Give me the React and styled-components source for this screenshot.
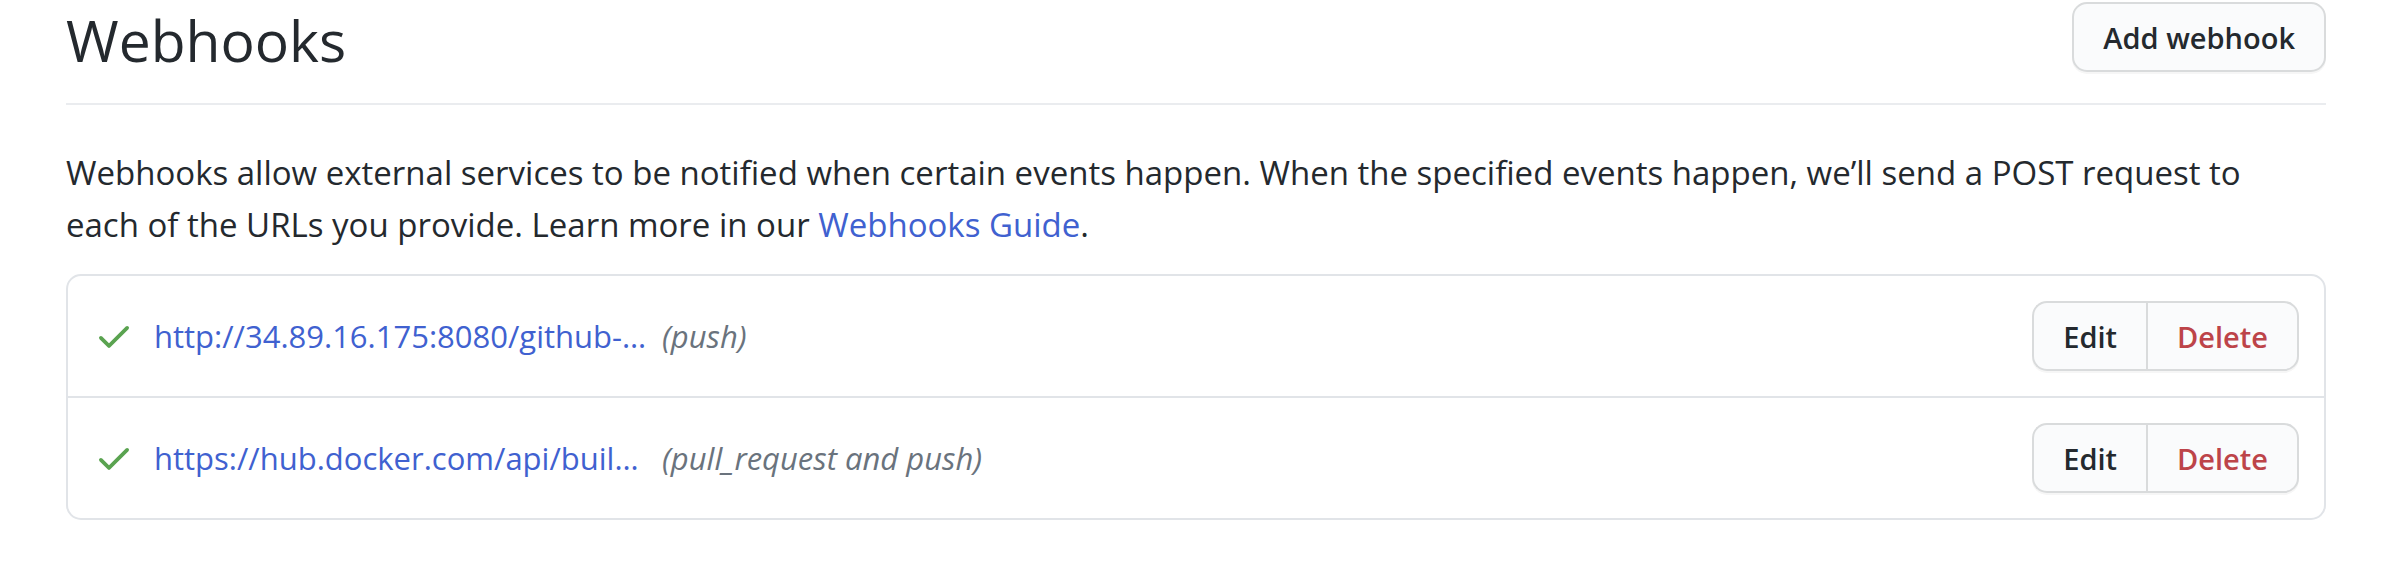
import React from "react";
import styled, { createGlobalStyle } from "styled-components";

const GlobalStyle = createGlobalStyle`
  *, *::before, *::after { box-sizing: border-box; }
  body {
    margin: 0;
    background: #fff;
    color: #24292e;
    font-family: "Segoe UI", "Open Sans", "Noto Sans", sans-serif;
    font-size: 33px;
    line-height: 52px;
  }
`;

const Page = styled.main`
  padding: 2px 66px 64px;
`;

const Header = styled.header`
  display: flex;
  align-items: flex-start;
  justify-content: space-between;
  height: 103px;
  border-bottom: 2px solid #eaecef;
`;

const Title = styled.h1`
  margin: 0;
  font-size: 57px;
  font-weight: 400;
  line-height: 76px;
`;

const Intro = styled.p`
  margin: 42px 0 23px;
  padding-right: 40px;
`;

const Link = styled.a`
  color: #4061d0;
  text-decoration: none;
  &:hover { text-decoration: underline; }
`;

const Button = styled.button`
  height: 70px;
  padding: 2px 29px 0;
  border: 2px solid #d9dbdc;
  border-radius: 15px;
  background: #fafbfc;
  box-shadow: 0 2px 0 rgba(27, 31, 35, 0.04);
  color: ${(p) => (p.$danger ? "#bd4449" : "#24292e")};
  font-family: inherit;
  font-size: 29px;
  font-weight: 600;
  line-height: 50px;
  cursor: pointer;
`;

const ButtonGroup = styled.div`
  display: flex;
  margin-left: auto;

  ${Button}:first-child {
    border-right: 0;
    border-radius: 15px 0 0 15px;
  }
  ${Button}:last-child {
    border-radius: 0 15px 15px 0;
  }
`;

const HookList = styled.ul`
  margin: 0;
  padding: 0;
  list-style: none;
  border: 2px solid #e1e4e8;
  border-radius: 15px;
`;

const HookRow = styled.li`
  display: flex;
  align-items: center;
  padding: 25px 25px 25px 26px;
  font-size: 31px;
  & + & { border-top: 2px solid #e1e4e8; }
`;

const CheckIcon = styled.svg`
  width: 40px;
  height: 40px;
  flex: none;
  margin-right: 20px;
  fill: #5aa350;
`;

const HookUrl = styled(Link)`
  flex: none;
  min-width: 508px;
  white-space: nowrap;
`;

const Events = styled.em`
  color: #6a737d;
`;

const hooks = [
  { url: "http://34.89.16.175:8080/github-…", events: "push" },
  { url: "https://hub.docker.com/api/buil…", events: "pull_request and push" },
];

export default function App() {
  return (
    <>
      <GlobalStyle />
      <Page>
        <Header>
          <Title>Webhooks</Title>
          <Button type="button">Add webhook</Button>
        </Header>
        <Intro>
          Webhooks allow external services to be notified when certain events happen. When the
          specified events happen, we’ll send a POST request to each of the URLs you provide. Learn
          more in our <Link href="#guide">Webhooks Guide</Link>.
        </Intro>
        <HookList>
          {hooks.map((hook) => (
            <HookRow key={hook.url}>
              <CheckIcon viewBox="0 0 16 16" aria-hidden="true">
                <path d="M13.78 4.22a.75.75 0 010 1.06l-7.25 7.25a.75.75 0 01-1.06 0L2.22 9.28a.75.75 0 011.06-1.06L6 10.94l6.72-6.72a.75.75 0 011.06 0z" />
              </CheckIcon>
              <HookUrl href="#hook">{hook.url}</HookUrl>
              <Events>({hook.events})</Events>
              <ButtonGroup>
                <Button type="button">Edit</Button>
                <Button type="button" $danger>
                  Delete
                </Button>
              </ButtonGroup>
            </HookRow>
          ))}
        </HookList>
      </Page>
    </>
  );
}
